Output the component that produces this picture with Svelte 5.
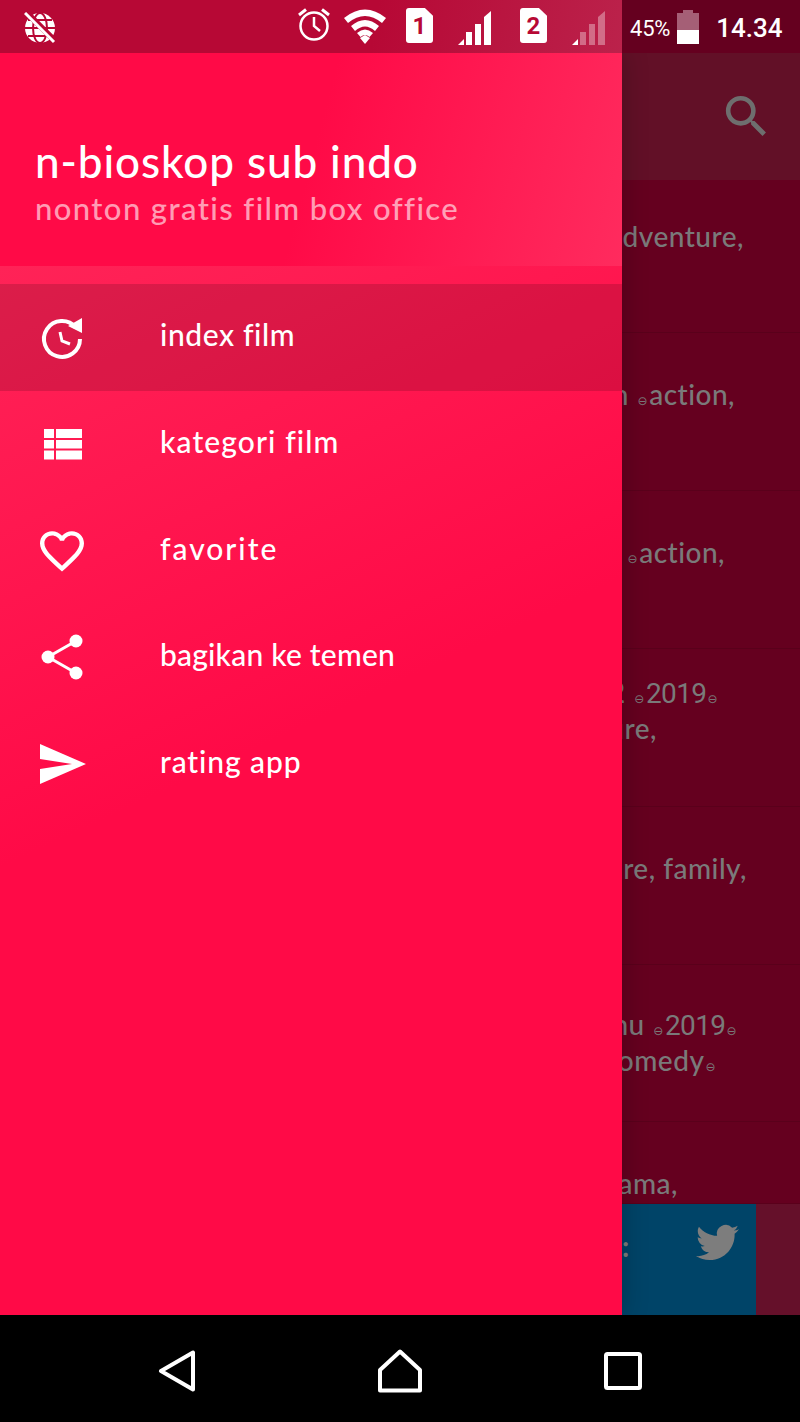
<script lang="ts">
  // rows of the film list that stay visible next to the open drawer
  const films = [
    { top: 39, height: 153, lines: [{ text: 'adventure,', right: 56 }] },
    { top: 44, height: 158, lines: [{ text: 'film ~action,', right: 65 }] },
    { top: 44, height: 158, lines: [{ text: '2019 ~action,', right: 75 }] },
    { top: 26, height: 158, lines: [{ text: 'sub 2 ~2019~', right: 81 }, { text: 'adventure,', right: 143 }] },
    { top: 44, height: 158, lines: [{ text: 'adventure, family,', right: 53 }] },
    { top: 42, height: 157, lines: [{ text: 'sub hu ~2019~', right: 62 }, { text: 'comedy~', right: 83 }] },
    { top: 44, height: 82, lines: [{ text: 'drama,', right: 122 }] }
  ];

  const menu = [
    { id: 'history', label: 'index film', active: true, spacing: 0.6 },
    { id: 'list', label: 'kategori film', active: false, spacing: 1.1 },
    { id: 'heart', label: 'favorite', active: false, spacing: 2 },
    { id: 'share', label: 'bagikan ke temen', active: false, spacing: 0.2 },
    { id: 'send', label: 'rating app', active: false, spacing: 0.9 }
  ];

  // "~" stands for the box glyph the app font could not draw, years come from the fallback font
  const parts = (text: string) => text.split(/(~|\d{4})/).filter(Boolean);
</script>

{#snippet signal(dim)}
  <svg class="signal" width="34" height="34" viewBox="0 0 34 34">
    <polygon points="1,34 7,28 7,34" fill="#fff" />
    <rect x="9" y="21" width="6" height="13" fill="#fff" opacity={dim ? 0.35 : 1} />
    <rect x="18" y="13" width="6" height="21" fill="#fff" opacity={dim ? 0.35 : 1} />
    <polygon points="27,6 34,0 34,34 27,34" fill="#fff" opacity={dim ? 0.35 : 1} />
  </svg>
{/snippet}

{#snippet sim(n)}
  <div class="sim"><span>{n}</span></div>
{/snippet}

{#snippet menuIcon(id)}
  <svg width="60" height="60" viewBox="0 0 60 60" fill="#fff">
    {#if id === 'history'}
      <path d="M43.8 20.4 A18 18 0 1 0 48 32" fill="none" stroke="#fff" stroke-width="4" />
      <polygon points="50,11 50,26 36,19" />
      <path d="M28 25 L30 34 L38 37" fill="none" stroke="#fff" stroke-width="3" />
    {:else if id === 'list'}
      <rect x="12" y="15" width="10" height="9" />
      <rect x="24" y="15" width="26" height="9" />
      <rect x="12" y="26" width="10" height="8.5" />
      <rect x="24" y="26" width="26" height="8.5" />
      <rect x="12" y="36.5" width="10" height="9" />
      <rect x="24" y="36.5" width="26" height="9" />
    {:else if id === 'heart'}
      <g transform="translate(3.6 3.6) scale(2.2)">
        <path d="M16.5 3c-1.74 0-3.41.81-4.5 2.09C10.91 3.81 9.24 3 7.5 3 4.42 3 2 5.42 2 8.5c0 3.78 3.4 6.86 8.55 11.54L12 21.35l1.45-1.32C18.6 15.36 22 12.28 22 8.5 22 5.42 19.58 3 16.5 3zm-4.4 15.55l-.1.1-.1-.1C7.14 14.24 4 11.39 4 8.5 4 6.5 5.5 5 7.5 5c1.54 0 3.04.99 3.57 2.36h1.87C13.46 5.99 14.96 5 16.5 5c2 0 3.5 1.5 3.5 3.5 0 2.89-3.14 5.74-7.9 10.05z" />
      </g>
    {:else if id === 'share'}
      <path d="M44 14 L16 30 L44 46" fill="none" stroke="#fff" stroke-width="3" />
      <circle cx="44" cy="14" r="6.5" />
      <circle cx="16" cy="30" r="6.5" />
      <circle cx="44" cy="46" r="6.5" />
    {:else}
      <polygon points="8,10 54,30 8,50 8,35 40,30 8,25" />
    {/if}
  </svg>
{/snippet}

<div class="phone">
  <header class="status">
    <div class="status-tint">
      <svg class="globe" width="32" height="32" viewBox="0 0 32 32">
        <circle cx="16" cy="16" r="15" fill="#fff" />
        <g fill="none" stroke="#b70835" stroke-width="2">
          <path d="M1 16 H31 M4 8 H28 M4 24 H28" />
          <ellipse cx="16" cy="16" rx="7" ry="15" />
        </g>
        <path d="M3 1 L31 29" stroke="#b70835" stroke-width="6" />
        <path d="M1 1 L30 30" stroke="#fff" stroke-width="3" />
      </svg>
      <div class="status-right">
        <svg width="32" height="34" viewBox="0 0 32 34" fill="none" stroke="#fff">
          <circle cx="16" cy="18" r="13.5" stroke-width="2.5" />
          <path d="M16 9 V18 L22 23" stroke-width="2.5" />
          <path d="M1 7 L8 1.5 M31 7 L24 1.5" stroke-width="3" />
        </svg>
        <svg width="42" height="36" viewBox="0 0 42 36" fill="#fff">
          <path d="M0 10 Q21 -7 42 10 L38 15 Q21 1 4 15 Z" />
          <path d="M7 18 Q21 6 35 18 L31 23 Q21 14 11 23 Z" />
          <path d="M13 25 Q21 18 29 25 L25.5 29 Q21 25 16.5 29 Z" />
          <polygon points="16,30 21,36 26,30 21,27" />
        </svg>
        {@render sim(1)}
        {@render signal(false)}
        {@render sim(2)}
        {@render signal(true)}
      </div>
    </div>
    <div class="status-dark">
      <span class="percent">45%</span>
      <div class="battery"><div class="battery-fill"></div></div>
      <span class="time">14.34</span>
    </div>
  </header>

  <main class="screen">
    <div class="appbar">
      <svg width="55" height="55" viewBox="0 0 24 24" fill="#6e6e6e">
        <path d="M15.5 14h-.79l-.28-.27A6.471 6.471 0 0 0 16 9.5 6.5 6.5 0 1 0 9.5 16c1.61 0 3.09-.59 4.23-1.57l.27.28v.79l5 4.99L20.49 19l-4.99-5zm-6 0C7.01 14 5 11.99 5 9.5S7.01 5 9.5 5 14 7.01 14 9.5 11.99 14 9.5 14z" />
      </svg>
    </div>

    <div class="film-list">
      {#each films as film}
        <div class="film" style="height: {film.height}px; padding-top: {film.top}px">
          {#each film.lines as line}
            <p style="padding-right: {line.right}px">{#each parts(line.text) as part}{#if part === '~'}<span class="missing">⊖</span>{:else if /\d{4}/.test(part)}<span class="year">{part}</span>{:else}{part}{/if}{/each}</p>
          {/each}
        </div>
      {/each}
    </div>

    <div class="share-bar">
      <div class="twitter">
        <span>:</span>
        <svg width="43" height="43" viewBox="0 0 24 24" fill="#7d7d7d">
          <path d="M23.953 4.57a10 10 0 01-2.825.775 4.958 4.958 0 002.163-2.723c-.951.555-2.005.959-3.127 1.184a4.92 4.92 0 00-8.384 4.482C7.69 8.095 4.067 6.13 1.64 3.162a4.822 4.822 0 00-.666 2.475c0 1.71.87 3.213 2.188 4.096a4.904 4.904 0 01-2.228-.616v.06a4.923 4.923 0 003.946 4.827 4.996 4.996 0 01-2.212.085 4.936 4.936 0 004.604 3.417 9.867 9.867 0 01-6.102 2.105c-.39 0-.779-.023-1.17-.067a13.995 13.995 0 007.557 2.209c9.053 0 13.998-7.496 13.998-13.985 0-.21 0-.42-.015-.63A9.935 9.935 0 0024 4.59z" />
        </svg>
      </div>
    </div>

    <aside class="drawer">
      <div class="drawer-head">
        <h1>n-bioskop sub indo</h1>
        <p>nonton gratis film box office</p>
      </div>
      <nav class="drawer-menu">
        {#each menu as item}
          <div class="item" class:active={item.active}>
            {@render menuIcon(item.id)}
            <span style="letter-spacing: {item.spacing}px">{item.label}</span>
          </div>
        {/each}
      </nav>
    </aside>
  </main>

  <footer class="navbar">
    <svg width="38" height="42" viewBox="0 0 38 42" fill="none" stroke="#fff" stroke-width="4" stroke-linejoin="round">
      <polygon points="3,21 35,2.5 35,39.5" />
    </svg>
    <svg width="44" height="44" viewBox="0 0 44 44" fill="none" stroke="#fff" stroke-width="4" stroke-linejoin="round">
      <polygon points="22,2.5 42,21 42,41.5 2,41.5 2,21" />
    </svg>
    <svg width="38" height="38" viewBox="0 0 38 38" fill="none" stroke="#fff" stroke-width="4" stroke-linejoin="round">
      <rect x="2" y="2" width="34" height="34" rx="1.5" />
    </svg>
  </footer>
</div>

<style>
  :global(body) {
    margin: 0;
    background: #000;
  }

  .phone {
    width: 800px;
    height: 1422px;
    display: flex;
    flex-direction: column;
    overflow: hidden;
    font-family: Lato, "Noto Sans", sans-serif;
  }

  /* status bar */
  .status {
    height: 53px;
    flex: none;
    display: flex;
    color: #fff;
    font-family: Roboto, sans-serif;
  }

  .status-tint {
    width: 622px;
    display: flex;
    align-items: center;
    justify-content: space-between;
    padding: 0 17px 0 24px;
    box-sizing: border-box;
    background: linear-gradient(100deg, #b70835 60%, #bb224b 100%);
  }

  .globe {
    margin-top: 3px;
  }

  .status-right {
    display: flex;
    align-items: center;
    margin-top: -2px;
  }

  .status-right > svg:first-child {
    margin-right: 14px;
    margin-top: -2px;
  }

  .status-right > svg:nth-child(2) {
    margin-right: 20px;
  }

  .sim {
    width: 27px;
    height: 35px;
    background: #fff;
    border-radius: 3px;
    clip-path: polygon(0 0, 70% 0, 100% 22%, 100% 100%, 0 100%);
    display: flex;
    align-items: center;
    justify-content: center;
    color: #b70835;
    font-size: 24px;
    font-weight: 700;
  }

  .signal {
    margin-left: 24px;
    margin-right: 29px;
    margin-top: 5px;
  }

  .signal:last-child {
    margin-right: 0;
  }

  .status-dark {
    flex: 1;
    display: flex;
    align-items: center;
    background: #65001f;
    padding: 3px 0 0 8px;
    box-sizing: border-box;
  }

  .percent {
    font-size: 22px;
    letter-spacing: -0.2px;
  }

  .battery {
    width: 22px;
    height: 31px;
    margin: 1px 17px 0 7px;
    position: relative;
    background: #a55f76;
    display: flex;
    align-items: flex-end;
  }

  .battery::before {
    content: "";
    position: absolute;
    top: -3px;
    left: 6px;
    width: 10px;
    height: 3px;
    background: #a55f76;
  }

  .battery-fill {
    width: 100%;
    height: 45%;
    background: #fff;
  }

  .time {
    font-size: 26px;
    font-weight: 500;
  }

  /* page behind the drawer */
  .screen {
    position: relative;
    flex: 1;
    display: flex;
    flex-direction: column;
    background: #65001f;
    overflow: hidden;
  }

  .appbar {
    height: 127px;
    flex: none;
    display: flex;
    justify-content: flex-end;
    align-items: center;
    padding-right: 26px;
    box-sizing: border-box;
    background: #621027;
  }

  .film-list {
    flex: 1;
    overflow: hidden;
  }

  .film {
    box-sizing: border-box;
    border-bottom: 1px solid #5a001b;
    text-align: right;
    color: #7a7a7a;
    font-size: 28px;
    font-weight: 500;
    letter-spacing: 0.5px;
    line-height: 35px;
    white-space: nowrap;
  }

  .film p {
    margin: 0;
  }

  .missing {
    font-family: "DejaVu Sans", sans-serif;
    font-size: 12px;
    line-height: 1;
    margin: 0 1px;
  }

  .year {
    font-family: Roboto, sans-serif;
    font-weight: 400;
    letter-spacing: -0.6px;
  }

  .share-bar {
    height: 111px;
    flex: none;
    display: flex;
    justify-content: flex-end;
    background: #65102a;
    padding-right: 44px;
  }

  .twitter {
    width: 134px;
    background: #004468;
    padding: 17px 17px 0 0;
    box-sizing: border-box;
    display: flex;
    justify-content: space-between;
    align-items: flex-start;
    color: #7d7d7d;
    font-size: 28px;
    font-weight: 700;
    line-height: 50px;
  }

  /* drawer */
  .drawer {
    position: absolute;
    top: 0;
    bottom: 0;
    left: 0;
    width: 622px;
    display: flex;
    flex-direction: column;
    color: #fff;
    background: #ff0a47;
    box-shadow: 0 0 24px rgba(0, 0, 0, 0.25);
  }

  .drawer-head {
    height: 213px;
    flex: none;
    box-sizing: border-box;
    padding: 81px 0 0 35px;
    background: linear-gradient(105deg, #ff0a47 50%, #ff2b5e 100%);
  }

  .drawer-head h1 {
    margin: 0;
    font-size: 44px;
    line-height: 54px;
    font-weight: 500;
    letter-spacing: 0.9px;
  }

  .drawer-head p {
    margin: -2px 0 0;
    font-size: 31px;
    line-height: 44px;
    font-weight: 500;
    letter-spacing: 1.4px;
    color: rgba(255, 255, 255, 0.6);
  }

  .drawer-menu {
    flex: 1;
    padding-top: 18px;
    background: linear-gradient(155deg, #ff2357 0, #ff0a47 45%);
  }

  .item {
    height: 106.7px;
    display: flex;
    align-items: center;
    gap: 68px;
    padding-left: 32px;
    font-size: 30px;
    font-weight: 500;
  }

  .item span {
    margin-top: -6px;
  }

  .item.active {
    background: rgba(0, 0, 0, 0.14);
  }

  /* android nav */
  .navbar {
    height: 107px;
    flex: none;
    box-sizing: border-box;
    background: #000;
    display: flex;
    align-items: center;
    padding: 5px 158px 0;
    justify-content: space-between;
  }
</style>
